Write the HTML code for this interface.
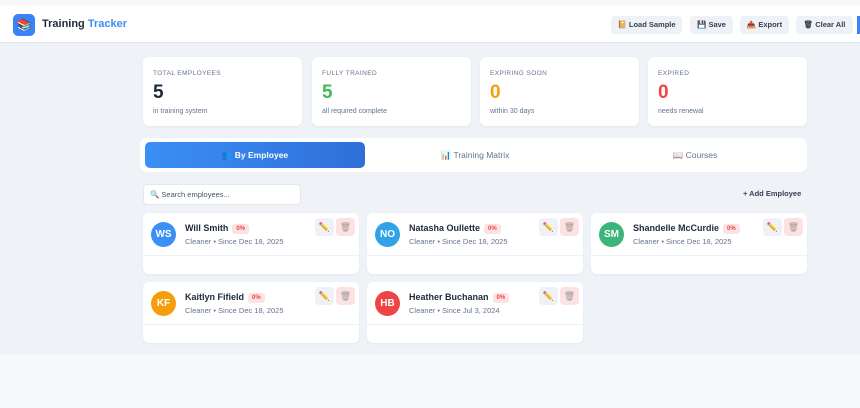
<!DOCTYPE html><html><head><style>
*{box-sizing:border-box;margin:0;padding:0}
body{width:860px;height:408px;background:#f7f8fa;font-family:"Liberation Sans",sans-serif;position:relative;overflow:hidden;color:#1e293b}
.main{position:absolute;left:0;top:43px;width:860px;height:311px;background:#eff2f7}
.hdr{position:absolute;left:0;top:5px;width:860px;height:38px;background:#fff;border-bottom:1px solid #e3e7ee}
.logo{position:absolute;left:13px;top:9px;width:22px;height:22px;border-radius:5px;background:#3b82f6;text-align:center;font-size:12px;line-height:22px}
.title{position:absolute;left:42px;top:13px;font-size:11px;font-weight:bold;color:#1f2937}
.title span{color:#3b8df0}
.btn{position:absolute;top:11px;height:18px;background:#eef1f5;border-radius:4px;font-size:7.5px;font-weight:bold;color:#374151;line-height:18px;text-align:center}
.stat{position:absolute;top:57px;height:69px;width:159px;background:#fff;border-radius:6px;box-shadow:0 1px 2px rgba(0,0,0,.05);padding:13px 10px}
.stat .l{font-size:6.5px;letter-spacing:.4px;color:#64748b}
.stat .n{font-size:19px;font-weight:bold;margin-top:5px}
.stat .s{font-size:7px;color:#64748b;margin-top:4px}
.tabs{position:absolute;left:140px;top:138px;width:667px;height:34px;background:#fff;border-radius:7px}
.tab{position:absolute;top:4px;height:26px;width:220px;line-height:26px;text-align:center;font-size:8.5px;color:#64748b;border-radius:5px}
.card{position:absolute;width:216px;height:61px;background:#fff;border-radius:6px;box-shadow:0 1px 2px rgba(0,0,0,.05)}
.card:after{content:"";position:absolute;left:0;right:0;top:42px;border-top:1px solid #eef1f5}
.av{position:absolute;left:8px;top:9px;width:25px;height:25px;border-radius:50%;color:#fff;font-size:10px;font-weight:bold;text-align:center;line-height:25px}
.nm{position:absolute;left:42px;top:10px;font-size:9px;font-weight:bold;color:#1e293b}
.bd{display:inline-block;margin-left:4px;background:#fde2e2;color:#ef4444;font-size:6px;padding:2px 4px;border-radius:3px;vertical-align:1px}
.sub{position:absolute;left:42px;top:24px;font-size:7.5px;color:#64748b}
.ed,.dl{position:absolute;top:5px;width:19px;height:18px;border-radius:4px;font-size:9px;text-align:center;line-height:18px}
.ed{right:25px;background:#eef1f5}.dl{right:4px;background:#fde2e2;color:#999}
</style></head><body>
<div class="main"></div>
<div class="hdr">
<div class="logo">📚</div>
<div class="title">Training <span>Tracker</span></div>
<div class="btn" style="left:611px;width:71px">📔 Load Sample</div>
<div class="btn" style="left:690px;width:43px">💾 Save</div>
<div class="btn" style="left:740px;width:49px">📤 Export</div>
<div class="btn" style="left:796px;width:57px">🗑 Clear All</div>
<div style="position:absolute;left:857px;top:11px;width:3px;height:18px;background:#3b82f6"></div>
</div>
<div class="stat" style="left:143px"><div class="l">TOTAL EMPLOYEES</div><div class="n">5</div><div class="s">in training system</div></div>
<div class="stat" style="left:312px"><div class="l">FULLY TRAINED</div><div class="n" style="color:#3dbb5a">5</div><div class="s">all required complete</div></div>
<div class="stat" style="left:480px"><div class="l">EXPIRING SOON</div><div class="n" style="color:#f59e0b">0</div><div class="s">within 30 days</div></div>
<div class="stat" style="left:648px"><div class="l">EXPIRED</div><div class="n" style="color:#ef4444">0</div><div class="s">needs renewal</div></div>
<div class="tabs">
<div class="tab" style="left:5px;background:linear-gradient(90deg,#3b8ff5,#2f6fd8);color:#fff;font-weight:bold">👥 By Employee</div>
<div class="tab" style="left:225px">📊 Training Matrix</div>
<div class="tab" style="left:445px">📖 Courses</div>
</div>
<div style="position:absolute;left:143px;top:184px;width:158px;height:21px;background:#fff;border:1px solid #e5e7eb;border-radius:4px;font-size:7.5px;color:#4b5563;line-height:19px;padding-left:6px">🔍 Search employees...</div>
<div style="position:absolute;left:743px;top:189px;font-size:7.5px;font-weight:bold;color:#374151">+ Add Employee</div>

<div class="card" style="left:143px;top:213px"><div class="av" style="background:#3b8ff5">WS</div><div class="nm">Will Smith<span class="bd">0%</span></div><div class="sub">Cleaner • Since Dec 18, 2025</div><div class="ed">✏️</div><div class="dl">🗑</div></div>
<div class="card" style="left:367px;top:213px"><div class="av" style="background:#2fa3e6">NO</div><div class="nm">Natasha Oullette<span class="bd">0%</span></div><div class="sub">Cleaner • Since Dec 18, 2025</div><div class="ed">✏️</div><div class="dl">🗑</div></div>
<div class="card" style="left:591px;top:213px"><div class="av" style="background:#3bb57a">SM</div><div class="nm">Shandelle McCurdie<span class="bd">0%</span></div><div class="sub">Cleaner • Since Dec 18, 2025</div><div class="ed">✏️</div><div class="dl">🗑</div></div>
<div class="card" style="left:143px;top:282px"><div class="av" style="background:#f59e0b">KF</div><div class="nm">Kaitlyn Fifield<span class="bd">0%</span></div><div class="sub">Cleaner • Since Dec 18, 2025</div><div class="ed">✏️</div><div class="dl">🗑</div></div>
<div class="card" style="left:367px;top:282px"><div class="av" style="background:#ef4444">HB</div><div class="nm">Heather Buchanan<span class="bd">0%</span></div><div class="sub">Cleaner • Since Jul 3, 2024</div><div class="ed">✏️</div><div class="dl">🗑</div></div>
</body></html>
